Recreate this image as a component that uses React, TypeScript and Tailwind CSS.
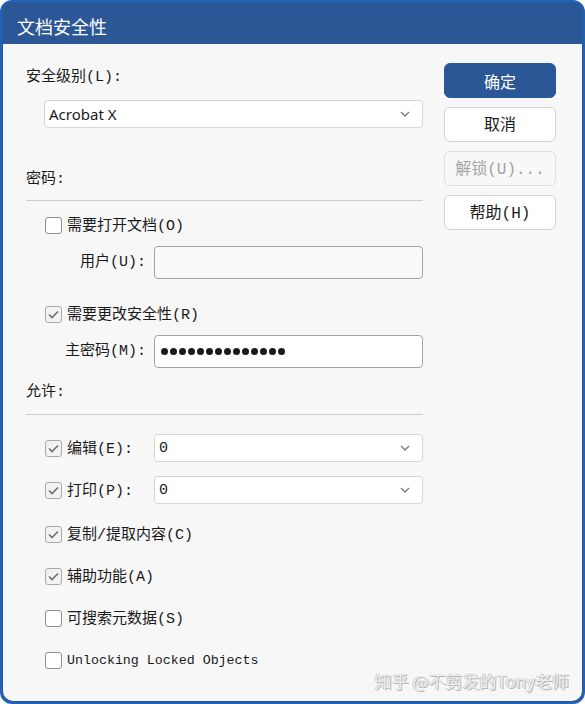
import React from "react";

const song = "font-['Liberation_Mono','Noto_Sans_CJK_SC',monospace]";

function Chevron() {
  return (
    <svg width="10" height="6" viewBox="0 0 10 6" className="mr-[12px]">
      <polyline points="1,1 5,5 9,1" fill="none" stroke="#7a7a7a" strokeWidth="1.3" />
    </svg>
  );
}

function Select({ value, className = "", textClass = "" }: { value: string; className?: string; textClass?: string }) {
  return (
    <div className={`flex h-[28px] items-center justify-between rounded-[4px] border border-[#d6d6d6] bg-white ${className}`}>
      <span className={`pl-[4px] text-[15px] leading-none text-[#1a1a1a] ${textClass}`}>{value}</span>
      <Chevron />
    </div>
  );
}

function Check({ checked, label, mono }: { checked?: boolean; label: string; mono?: boolean }) {
  return (
    <div className="flex h-[20px] items-center">
      <div
        className={`flex h-[17px] w-[17px] items-center justify-center rounded-[3px] border ${
          checked ? "border-[#a9a9a9] bg-[#f2f2f2]" : "border-[#8f8f8f] bg-white"
        }`}
      >
        {checked && (
          <svg width="11" height="9" viewBox="0 0 11 9">
            <polyline points="1,4.5 4,7.5 10,1.5" fill="none" stroke="#6e6e6e" strokeWidth="1.6" />
          </svg>
        )}
      </div>
      <span
        className={`ml-[5px] pt-[2px] leading-none text-[#1a1a1a] ${
          mono ? "font-['Liberation_Mono',monospace] text-[13.3px]" : `${song} text-[15px]`
        }`}
      >
        {label}
      </span>
    </div>
  );
}

function Button({ label, primary, disabled }: { label: string; primary?: boolean; disabled?: boolean }) {
  const tone = primary
    ? "bg-[#2b5797] border-[#2b5797] text-white font-['Noto_Sans_CJK_SC',sans-serif]"
    : disabled
    ? "bg-[#f8f8f8] border-[#dedede] text-[#a3a3a3] pt-[3px] " + song
    : "bg-white border-[#d3d3d3] text-[#1a1a1a] pt-[2px] " + song;
  return (
    <div className={`flex h-[35px] w-[112px] items-center justify-center rounded-[6px] border text-[16px] leading-none ${tone}`}>
      {label}
    </div>
  );
}

export default function App() {
  return (
    <div className="relative h-[704px] w-[585px] bg-white">
      <div className="flex h-full flex-col rounded-[12px] border-2 border-[#1f63b9] bg-[#2b5797]">
        <div className="flex h-[42px] items-center pl-[15px] pt-[6px] font-['Noto_Sans_CJK_SC',sans-serif] text-[18px] text-white">
          文档安全性
        </div>
        <div className="mx-[1px] mb-[1px] flex flex-1 rounded-b-[10px] bg-[#f7f7f7] pl-[23px] pt-[19px]">
          <div className={`w-[397px] pt-[5px] text-[15px] text-[#1a1a1a] ${song}`}>
            <div className="h-[20px] leading-[20px]">安全级别(L):</div>
            <Select value="Acrobat X" className="ml-[18px] mt-[12px]" textClass="font-['Noto_Sans',sans-serif]" />

            <div className="mt-[42px] h-[20px] leading-[20px]">密码:</div>
            <div className="mt-[10px] h-px bg-[#cdcdcd]" />

            <div className="ml-[19px] mt-[14px]">
              <Check label="需要打开文档(O)" />
            </div>
            <div className="mt-[11px] flex items-center">
              <div className="mr-[8px] w-[120px] text-right leading-none">用户(U):</div>
              <div className="h-[33px] w-[269px] rounded-[4px] border border-[#a3a3a3] bg-[#f9f9f9]" />
            </div>

            <div className="ml-[19px] mt-[25px]">
              <Check checked label="需要更改安全性(R)" />
            </div>
            <div className="mt-[11px] flex items-center">
              <div className="mr-[8px] w-[120px] text-right leading-none">主密码(M):</div>
              <div className="flex h-[33px] w-[269px] items-center gap-[2px] rounded-[4px] border border-[#a3a3a3] bg-white pl-[6px]">
                {Array.from({ length: 14 }).map((_, i) => (
                  <span key={i} className="h-[7px] w-[7px] rounded-full bg-[#1a1a1a]" />
                ))}
              </div>
            </div>

            <div className="mt-[15px] h-[20px] leading-[20px]">允许:</div>
            <div className="mt-[11px] h-px bg-[#cdcdcd]" />

            <div className="mt-[19px] flex items-center">
              <div className="ml-[19px] w-[109px]">
                <Check checked label="编辑(E):" />
              </div>
              <Select value="0" className="w-[269px]" textClass={song} />
            </div>
            <div className="mt-[14px] flex items-center">
              <div className="ml-[19px] w-[109px]">
                <Check checked label="打印(P):" />
              </div>
              <Select value="0" className="w-[269px]" textClass={song} />
            </div>

            <div className="ml-[19px] mt-[20px] flex flex-col gap-[22px]">
              <Check checked label="复制/提取内容(C)" />
              <Check checked label="辅助功能(A)" />
              <Check label="可搜索元数据(S)" />
              <Check mono label="Unlocking Locked Objects" />
            </div>
          </div>

          <div className="ml-[21px] flex w-[112px] flex-col gap-[9px]">
            <Button primary label="确定" />
            <Button label="取消" />
            <Button disabled label="解锁(U)..." />
            <Button label="帮助(H)" />
          </div>
        </div>
      </div>
      <div className="absolute bottom-[15px] right-[16px] font-['Noto_Sans_CJK_SC',sans-serif] text-[17px] leading-none text-[#ececec] [text-shadow:1px_1px_0_#b5b5b5,-1px_0_0_#d0d0d0]">
        知乎 @不剪发的Tony老师
      </div>
    </div>
  );
}
